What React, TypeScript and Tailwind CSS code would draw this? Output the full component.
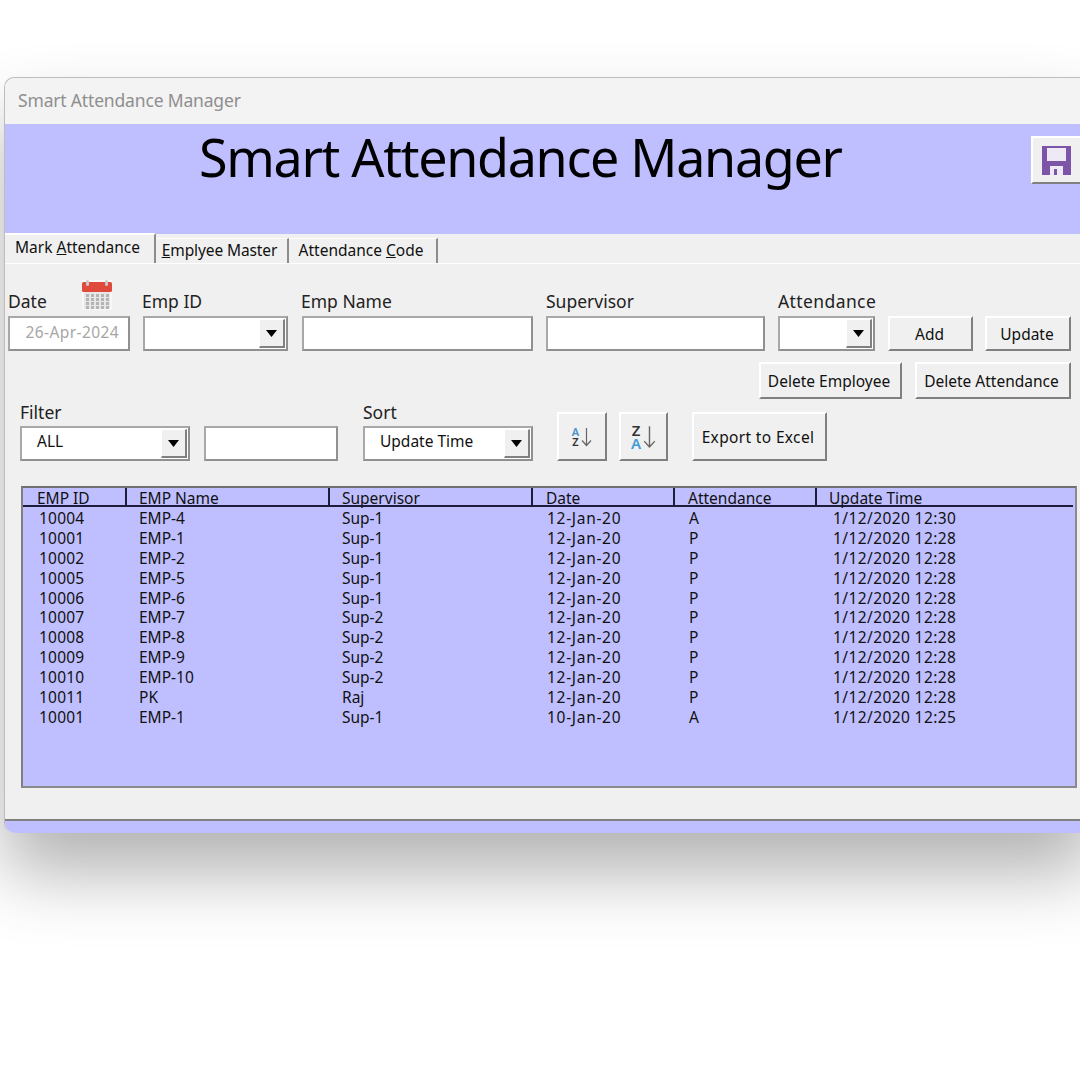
const font = "[font-family:'Noto_Sans','DejaVu_Sans',sans-serif]";

const rows = [
  ["10004", "EMP-4", "Sup-1", "12-Jan-20", "A", "1/12/2020 12:30"],
  ["10001", "EMP-1", "Sup-1", "12-Jan-20", "P", "1/12/2020 12:28"],
  ["10002", "EMP-2", "Sup-1", "12-Jan-20", "P", "1/12/2020 12:28"],
  ["10005", "EMP-5", "Sup-1", "12-Jan-20", "P", "1/12/2020 12:28"],
  ["10006", "EMP-6", "Sup-1", "12-Jan-20", "P", "1/12/2020 12:28"],
  ["10007", "EMP-7", "Sup-2", "12-Jan-20", "P", "1/12/2020 12:28"],
  ["10008", "EMP-8", "Sup-2", "12-Jan-20", "P", "1/12/2020 12:28"],
  ["10009", "EMP-9", "Sup-2", "12-Jan-20", "P", "1/12/2020 12:28"],
  ["10010", "EMP-10", "Sup-2", "12-Jan-20", "P", "1/12/2020 12:28"],
  ["10011", "PK", "Raj", "12-Jan-20", "P", "1/12/2020 12:28"],
  ["10001", "EMP-1", "Sup-1", "10-Jan-20", "A", "1/12/2020 12:25"],
];
const headers = ["EMP ID", "EMP Name", "Supervisor", "Date", "Attendance", "Update Time"];
const grid = "grid grid-cols-[104px_203px_203px_142px_142px_1fr]";
const headerPad = ["pl-[14px]", "pl-[12px]", "pl-[12px]", "pl-[13px]", "pl-[13px]", "pl-[12px]"];
const cellPad = [
  "pl-[16px] tracking-[0.2px]",
  "pl-[12px]",
  "pl-[12px]",
  "pl-[14px] tracking-[0.7px]",
  "pl-[14px]",
  "pl-[16px] tracking-[0.4px]",
];

function Field({ className = "", children }: { className?: string; children?: React.ReactNode }) {
  return (
    <div className={`h-[35px] bg-white border-2 border-t-[#a8a8a8] border-l-[#a8a8a8] border-r-[#909090] border-b-[#909090] flex items-center ${className}`}>
      {children}
    </div>
  );
}

function Combo({ className = "", value }: { className?: string; value?: string }) {
  return (
    <Field className={`relative ${className}`}>
      <span className="pl-[15px] pb-[4px] text-[15.5px] text-[#111] whitespace-nowrap">{value}</span>
      <div className="ml-auto mr-[1px] w-[26px] h-[29px] bg-[#f0f0f0] border-b-2 border-r-2 border-b-[#808080] border-r-[#808080] border-t border-l border-t-white border-l-white flex items-center justify-center">
        <svg width="11" height="7" viewBox="0 0 11 7"><path d="M0 0h11L5.5 7z" fill="#000" /></svg>
      </div>
    </Field>
  );
}

function Btn({ className = "", children }: { className?: string; children?: React.ReactNode }) {
  return (
    <div className={`bg-[#f0f0f0] border-2 border-t-white border-l-white border-r-[#808080] border-b-[#808080] flex items-center justify-center text-[15.5px] text-[#111] ${className}`}>
      {children}
    </div>
  );
}

function Label({ className = "", children }: { className?: string; children?: React.ReactNode }) {
  return <div className={`h-[37px] flex items-end pb-[3px] text-[17.5px] leading-[24px] text-[#222] ${className}`}>{children}</div>;
}

function CalendarIcon() {
  return (
    <svg width="32" height="32" viewBox="0 0 32 32">
      <rect x="1" y="1" width="30" height="30" fill="#f7f7f7" />
      <rect x="1" y="3" width="30" height="10" rx="1.5" fill="#e04a3c" />
      <rect x="5" y="1" width="3" height="6" rx="1.5" fill="#c9c9c9" />
      <rect x="24" y="1" width="3" height="6" rx="1.5" fill="#c9c9c9" />
      <rect x="3" y="13" width="26" height="17" fill="#e7e7e7" />
      {[15, 19, 23, 27].map((y) =>
        [5, 10, 15, 20, 25].map((x) => <rect key={`${x}-${y}`} x={x} y={y} width="3" height="3" fill="#b4b4b4" />)
      )}
    </svg>
  );
}

function FloppyIcon() {
  return (
    <svg width="29" height="29" viewBox="0 0 29 29">
      <path d="M0 0h29v29H0z" fill="#7d55a8" />
      <rect x="5" y="2" width="19" height="13" fill="#efe9f5" />
      <rect x="8" y="20" width="13" height="9" fill="#efe9f5" />
      <rect x="12" y="23" width="3" height="6" fill="#7d55a8" />
    </svg>
  );
}

function SortIcon({ top, bottom, big }: { top: string; bottom: string; big?: boolean }) {
  const size = big ? "text-[15px] leading-[13px]" : "text-[11px] leading-[10px]";
  const topColor = top === "A" ? "text-[#4a90c8]" : "text-[#333]";
  const bottomColor = bottom === "A" ? "text-[#3f9bd6]" : "text-[#333]";
  return (
    <div className="flex items-center gap-[2px]">
      <div className={`flex flex-col items-center font-semibold ${size}`}>
        <span className={topColor}>{top}</span>
        <span className={bottomColor}>{bottom}</span>
      </div>
      <svg width={big ? 13 : 11} height={big ? 26 : 20} viewBox="0 0 11 20" fill="none" stroke="#666" strokeWidth="1.2">
        <path d="M5.5 1v17M1 13.5l4.5 5 4.5-5" />
      </svg>
    </div>
  );
}

export default function App() {
  return (
    <div className={`h-[1080px] w-[1080px] overflow-hidden bg-white pt-[77px] pl-[4px] ${font}`}>
      <div className="w-[1090px] h-[756px] flex flex-col rounded-l-[10px] shadow-[0_40px_70px_rgba(0,0,0,0.3)] bg-[#f0f0f0] border-l border-t border-[#bdbdbd]">
        <div className="h-[46px] shrink-0 flex items-center pl-[13px] pb-[2px] bg-[#f3f3f3] rounded-tl-[10px] text-[17.5px] tracking-[-0.17px] text-[#8f8f8f]">
          Smart Attendance Manager
        </div>

        <div className="h-[110px] shrink-0 bg-[#bfbfff] flex">
          <div className="w-[1026px] pl-[194px] text-[52px] leading-[66px] tracking-[-1.3px] whitespace-nowrap text-black">Smart Attendance Manager</div>
          <Btn className="w-[52px] h-[48px] mt-[12px] shrink-0 justify-start pl-[9px]">
            <FloppyIcon />
          </Btn>
        </div>

        <div className="h-[30px] shrink-0 flex items-end border-b border-b-white text-[15.5px] text-[#111]">
          <div className="w-[151px] h-[30px] border-t-2 border-t-white border-r-2 border-r-[#8c8c8c] bg-[#f0f0f0] flex items-center justify-center pb-[2px] pr-[4px]">
            <span>Mark <u>A</u>ttendance</span>
          </div>
          <div className="w-[133px] h-[25px] border-t border-t-white border-r-2 border-r-[#8c8c8c] flex items-center justify-center pr-[4px]">
            <span className="tracking-[-0.1px]"><u>E</u>mplyee Master</span>
          </div>
          <div className="w-[149px] h-[25px] border-t border-t-white border-r-2 border-r-[#8c8c8c] flex items-center justify-center pr-[3px]">
            <span>Attendance <u>C</u>ode</span>
          </div>
        </div>

        <div className="flex-1 flex flex-col">
          <div className="flex pt-[15px] pl-[3px] items-end">
            <div className="w-[122px] mr-[13px]">
              <Label className="relative">
                Date
                <div className="absolute left-[73px] top-0"><CalendarIcon /></div>
              </Label>
              <Field className="justify-end pr-[9px] pb-[2px] text-[15.5px] tracking-[0.4px] text-[#a6a6a6]">26-Apr-2024</Field>
            </div>
            <div className="w-[145px] mr-[14px]">
              <Label className="-ml-[1px]">Emp ID</Label>
              <Combo />
            </div>
            <div className="w-[231px] mr-[13px]">
              <Label className="-ml-[1px]">Emp Name</Label>
              <Field />
            </div>
            <div className="w-[219px] mr-[13px]">
              <Label>Supervisor</Label>
              <Field />
            </div>
            <div className="w-[97px] mr-[13px]">
              <Label className="tracking-[0.4px]">Attendance</Label>
              <Combo />
            </div>
            <Btn className="w-[85px] h-[35px] mr-[12px] pr-[2px] pt-[2px]">Add</Btn>
            <Btn className="w-[86px] h-[35px] pr-[2px] pt-[2px]">Update</Btn>
          </div>

          <div className="flex justify-end w-[1066px] mt-[11px] gap-[13px]">
            <Btn className="w-[143px] h-[37px] pr-[3px] pt-[2px]">Delete Employee</Btn>
            <Btn className="w-[156px] h-[37px] pr-[3px] pt-[2px]">Delete Attendance</Btn>
          </div>

          <div className="flex items-end mt-[13px] pl-[15px]">
            <div className="w-[170px] mr-[14px]">
              <div className="h-[14px] flex items-end text-[17.5px] leading-[24px] text-[#222] pb-[2px]">Filter</div>
              <Combo value="ALL" />
            </div>
            <Field className="w-[134px] mr-[25px]" />
            <div className="w-[170px] mr-[24px]">
              <div className="h-[14px] flex items-end text-[17.5px] leading-[24px] text-[#222] pb-[2px]">Sort</div>
              <Combo value="Update Time" />
            </div>
            <Btn className="w-[50px] h-[49px] mr-[12px]"><SortIcon top="A" bottom="Z" /></Btn>
            <Btn className="w-[49px] h-[49px] mr-[24px]"><SortIcon top="Z" bottom="A" big /></Btn>
            <Btn className="w-[135px] h-[49px] pr-[3px] pt-[2px] tracking-[0.35px]">Export to Excel</Btn>
          </div>

          <div className="ml-[16px] mt-[25px] w-[1056px] h-[302px] bg-[#bfbfff] border-2 border-t-[#707070] border-l-[#808080] border-r-[#8a8a8a] border-b-[#8a8a8a] text-[15.5px] text-[#111] pr-[2px]">
            <div className={`${grid} h-[19px] border-b-2 border-b-[#1d1d3a]`}>
              {headers.map((h, i) => (
                <div key={h} className={`leading-[20px] h-[17px] whitespace-nowrap ${headerPad[i]} ${i < 5 ? "border-r-2 border-r-[#1d1d3a]" : ""}`}>
                  {h}
                </div>
              ))}
            </div>
            <div className="pt-[2px]">
              {rows.map((r, i) => (
                <div key={i} className={`${grid} h-[19.9px] leading-[19.9px]`}>
                  {r.map((c, j) => (
                    <div key={j} className={`${cellPad[j]} whitespace-nowrap`}>{c}</div>
                  ))}
                </div>
              ))}
            </div>
          </div>
        </div>

        <div className="h-[14px] shrink-0 bg-[#bfbfff] border-t-2 border-t-[#808080] rounded-bl-[10px]" />
      </div>
    </div>
  );
}
